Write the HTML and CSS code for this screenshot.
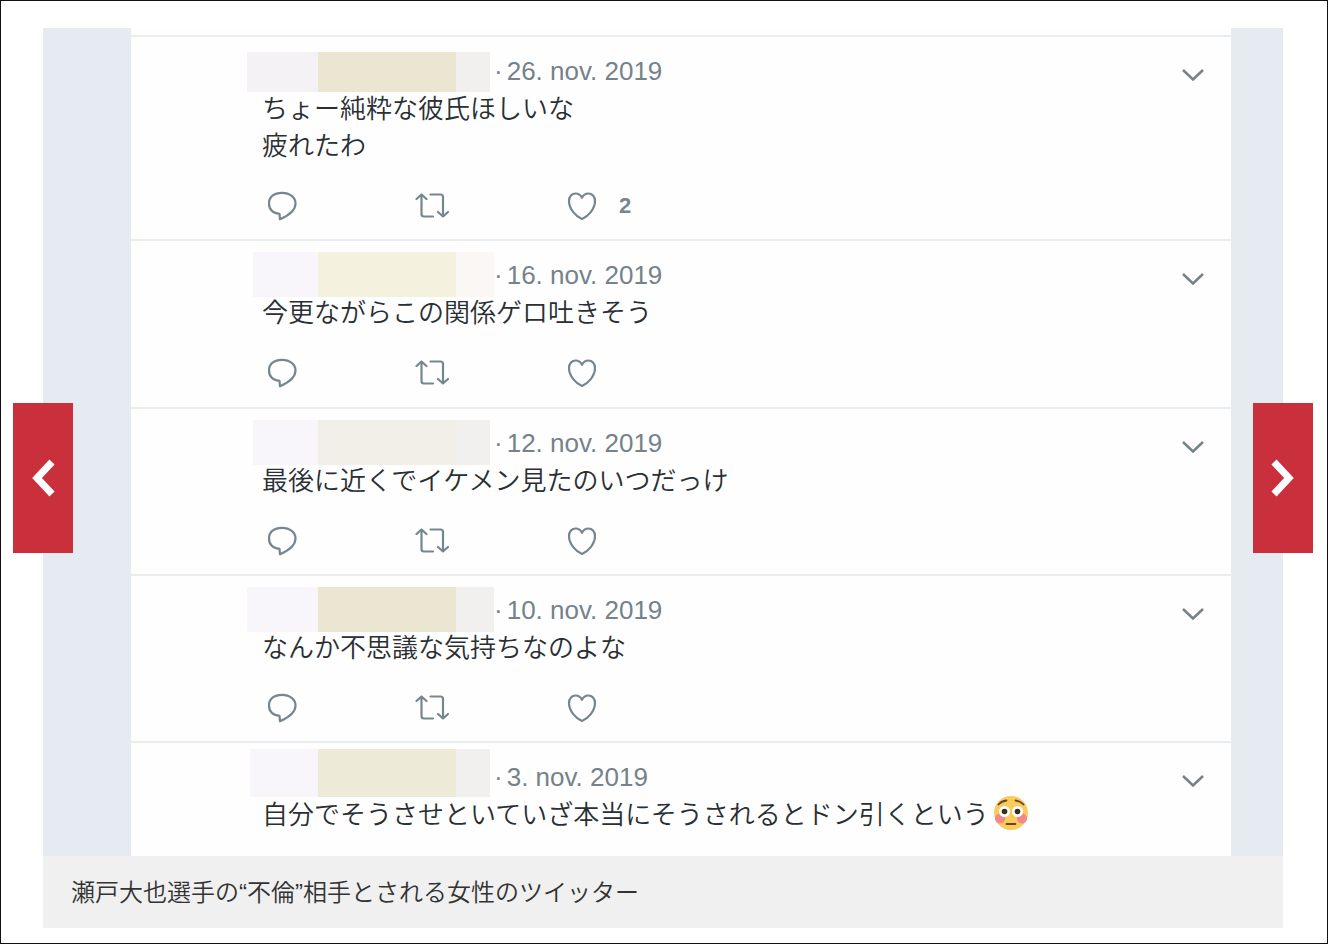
FILE: index.html
```
<!DOCTYPE html>
<html lang="ja">

<head>
    <meta charset="UTF-8">
    <meta name="viewport" content="width=device-width, initial-scale=1.0">
    <title>瀬戸大也選手の“不倫”相手とされる女性のツイッター</title>
    <link rel="stylesheet" href="styles.css">
</head>

<body>
    <!-- shared icons -->
    <svg class="sprite" aria-hidden="true">
        <symbol id="icon-reply" viewBox="0 0 34 34">
            <path d="M14.500 24.800C8 24 4 20.500 4 14.500C4 8 9 3.800 17 3.800S30.500 8.500 30.500 14.500C30.500 20.500 26 25.500 15 30.300Z" />
        </symbol>
        <symbol id="icon-retweet" viewBox="0 0 34 34">
            <path d="M1.500 10L6.500 5.500L11.500 10M6.500 6V25Q6.500 27.500 9 27.500H18M15.500 5.500H25.500Q28 5.500 28 8V27.500M23 23L28 27.500L33 23" />
        </symbol>
        <symbol id="icon-heart" viewBox="0 0 34 34">
            <path d="M17 30C11 27.500 4 20 4 12C4 7.500 7 4.500 10.500 4.500C13.500 4.500 15.800 6.200 17 8.800C18.200 6.200 20.500 4.500 23.500 4.500C27 4.500 30 7.500 30 12C30 20 23 27.500 17 30Z" />
        </symbol>
        <symbol id="icon-down" viewBox="0 0 24 14">
            <path d="M2 2L12 11.500L22 2" />
        </symbol>
    </svg>

    <main class="page">
        <figure class="slide">
            <div class="photo">
                <div class="timeline">
                    <article class="tweet tweet-1">
                        <header>
                            <div class="mask"><i></i><i></i><i></i></div>
                            <time datetime="2019-11-26"><span>·</span>26. nov. 2019</time>
                            <button class="more" aria-label="メニュー"><svg><use href="#icon-down" /></svg></button>
                        </header>
                        <p>ちょー純粋な彼氏ほしいな<br>疲れたわ</p>
                        <div class="actions">
                            <button aria-label="返信"><svg><use href="#icon-reply" /></svg></button>
                            <button aria-label="リツイート"><svg><use href="#icon-retweet" /></svg></button>
                            <button aria-label="いいね"><svg><use href="#icon-heart" /></svg><b>2</b></button>
                        </div>
                    </article>

                    <article class="tweet tweet-2">
                        <header>
                            <div class="mask"><i></i><i></i><i></i></div>
                            <time datetime="2019-11-16"><span>·</span>16. nov. 2019</time>
                            <button class="more" aria-label="メニュー"><svg><use href="#icon-down" /></svg></button>
                        </header>
                        <p>今更ながらこの関係ゲロ吐きそう</p>
                        <div class="actions">
                            <button aria-label="返信"><svg><use href="#icon-reply" /></svg></button>
                            <button aria-label="リツイート"><svg><use href="#icon-retweet" /></svg></button>
                            <button aria-label="いいね"><svg><use href="#icon-heart" /></svg></button>
                        </div>
                    </article>

                    <article class="tweet tweet-3">
                        <header>
                            <div class="mask"><i></i><i></i><i></i></div>
                            <time datetime="2019-11-12"><span>·</span>12. nov. 2019</time>
                            <button class="more" aria-label="メニュー"><svg><use href="#icon-down" /></svg></button>
                        </header>
                        <p>最後に近くでイケメン見たのいつだっけ</p>
                        <div class="actions">
                            <button aria-label="返信"><svg><use href="#icon-reply" /></svg></button>
                            <button aria-label="リツイート"><svg><use href="#icon-retweet" /></svg></button>
                            <button aria-label="いいね"><svg><use href="#icon-heart" /></svg></button>
                        </div>
                    </article>

                    <article class="tweet tweet-4">
                        <header>
                            <div class="mask"><i></i><i></i><i></i></div>
                            <time datetime="2019-11-10"><span>·</span>10. nov. 2019</time>
                            <button class="more" aria-label="メニュー"><svg><use href="#icon-down" /></svg></button>
                        </header>
                        <p>なんか不思議な気持ちなのよな</p>
                        <div class="actions">
                            <button aria-label="返信"><svg><use href="#icon-reply" /></svg></button>
                            <button aria-label="リツイート"><svg><use href="#icon-retweet" /></svg></button>
                            <button aria-label="いいね"><svg><use href="#icon-heart" /></svg></button>
                        </div>
                    </article>

                    <article class="tweet tweet-5">
                        <header>
                            <div class="mask"><i></i><i></i><i></i></div>
                            <time datetime="2019-11-03"><span>·</span>3. nov. 2019</time>
                            <button class="more" aria-label="メニュー"><svg><use href="#icon-down" /></svg></button>
                        </header>
                        <p>自分でそうさせといていざ本当にそうされるとドン引くという<svg class="emoji" viewBox="0 0 36 36" role="img" aria-label="赤面">
                                <circle cx="18" cy="18" r="17" fill="#f9cb5c" />
                                <circle cx="7" cy="23.500" r="5" fill="#f2878c" />
                                <circle cx="29" cy="23.500" r="5" fill="#f2878c" />
                                <circle cx="11.500" cy="16.500" r="5.500" fill="#fff" />
                                <circle cx="24.500" cy="16.500" r="5.500" fill="#fff" />
                                <circle cx="11.500" cy="16.500" r="2.800" fill="#3d2b1c" />
                                <circle cx="24.500" cy="16.500" r="2.800" fill="#3d2b1c" />
                                <path d="M5.500 9.500Q8.500 6 13.500 5.500M30.500 9.500Q27.500 6 22.500 5.500M13.500 29H22.500" fill="none" stroke="#6a4520" stroke-width="1.800" stroke-linecap="round" />
                            </svg></p>
                    </article>
                </div>
            </div>
            <figcaption>瀬戸大也選手の“不倫”相手とされる女性のツイッター</figcaption>

            <button class="nav prev" aria-label="前へ"><svg viewBox="0 0 24 38"><path d="M21 3L6 19L21 35" /></svg></button>
            <button class="nav next" aria-label="次へ"><svg viewBox="0 0 24 38"><path d="M3 3L18 19L3 35" /></svg></button>
        </figure>
    </main>
</body>

</html>
```

FILE: styles.css
```
* {
    box-sizing: border-box;
}

body {
    margin: 0;
    background-color: #fff;
    color: #292f33;
    font-family: "Liberation Sans", "Noto Sans CJK JP", sans-serif;
}

button {
    display: flex;
    align-items: center;
    margin: 0;
    padding: 0;
    border: 0;
    background: none;
    font: inherit;
    color: inherit;
    cursor: pointer;
}

svg {
    display: block;
    fill: none;
    stroke: currentColor;
}

.sprite {
    display: none;
}

.page {
    min-height: 100vh;
    padding: 27px 44px 15px 42px;
    border: 1px solid #111;
}

.slide {
    position: relative;
    margin: 0;
}

/* photo with the grey-blue gutters */
.photo {
    padding: 0 52px 0 88px;
    background-color: #e6ebf2;
}

.timeline {
    padding-top: 7px;
    background-color: #fefefe;
}

.tweet {
    padding-left: 116px;
    border-top: 2px solid #e9edf0;
}

.tweet header {
    display: flex;
    align-items: flex-start;
    height: 51px;
    color: #76828a;
}

.tweet time {
    padding-top: 19px;
    font-size: 26px;
    line-height: 30px;
}

.tweet time span {
    margin-right: 4px;
}

.more {
    margin: 31px 26px 0 auto;
}

.more svg {
    width: 24px;
    height: 14px;
    stroke-width: 2.500;
}

.tweet p {
    display: flex;
    align-items: center;
    margin: 0;
    padding-left: 15px;
    font-family: "Noto Sans CJK JP", sans-serif;
    font-size: 26px;
    font-weight: 350;
    line-height: 37px;
}

.emoji {
    width: 36px;
    height: 36px;
    margin-left: 4px;
    stroke: none;
}

.actions {
    display: grid;
    grid-template-columns: repeat(3, 150px);
    padding: 27px 0 16px 18px;
    color: #76868f;
}

.actions svg {
    width: 34px;
    height: 34px;
    stroke-width: 2.200;
    stroke-linejoin: round;
    stroke-linecap: round;
}

.actions b {
    margin-left: 20px;
    font-size: 22px;
    line-height: 34px;
}

.tweet-2 .actions {
    padding-bottom: 17px;
}

.tweet-5 {
    padding-bottom: 25px;
}

/* hides the account name */
.mask {
    display: grid;
    grid-template-columns: 71px 138px 38px;
    height: 45px;
    margin-top: 11px;
}

.mask i:nth-child(1) {
    background-color: #f8f6fa;
}

.mask i:nth-child(2) {
    background-color: #ebe6d2;
}

.mask i:nth-child(3) {
    background-color: #f2f0ee;
}

.tweet-1 .mask {
    height: 40px;
    margin-top: 15px;
}

.tweet-1 .mask i:nth-child(1) {
    background-color: #f4f2f5;
}

.tweet-2 .mask i:nth-child(1),
.tweet-3 .mask i:nth-child(1) {
    margin-left: 6px;
}

.tweet-2 .mask i:nth-child(2) {
    background-color: #f5f1df;
}

.tweet-2 .mask i:nth-child(3) {
    background-color: #faf7f5;
}

.tweet-3 .mask i:nth-child(2) {
    background-color: #f1efe7;
}

.tweet-5 .mask {
    height: 48px;
    margin-top: 6px;
}

.tweet-5 .mask i:nth-child(1) {
    margin-left: 3px;
}

.tweet-5 .mask i:nth-child(2) {
    background-color: #eeead8;
}

.tweet-1 .mask i:nth-child(3),
.tweet-3 .mask i:nth-child(3),
.tweet-5 .mask i:nth-child(3) {
    margin-right: 4px;
}

figcaption {
    padding: 19px 28px 17px;
    background-color: #f0f0f0;
    color: #333;
    font-size: 24px;
    font-weight: 350;
    line-height: 36px;
}

/* slider arrows over both edges */
.nav {
    position: absolute;
    top: 50%;
    justify-content: center;
    width: 60px;
    height: 150px;
    background-color: #ca303c;
    color: #fff;
    transform: translateY(-50%);
}

.nav svg {
    width: 24px;
    height: 38px;
    stroke-width: 7;
}

.prev {
    left: -30px;
}

.next {
    right: -30px;
}
```
